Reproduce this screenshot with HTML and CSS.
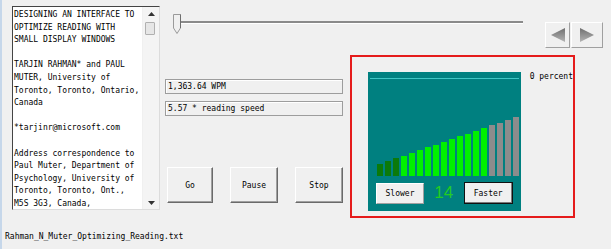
FILE: index.html
```html
<!DOCTYPE html>
<html lang="en">
<head>
  <meta charset="UTF-8">
  <title>Reading Window</title>
  <link rel="stylesheet" href="styles.css">
</head>
<body>
  <div class="window">
    <div class="main">

      <!-- document text -->
      <div class="doc">
        <div class="doc-text">DESIGNING AN INTERFACE TO
OPTIMIZE READING WITH
SMALL DISPLAY WINDOWS

TARJIN RAHMAN* and PAUL
MUTER, University of
Toronto, Toronto, Ontario,
Canada

*tarjinr@microsoft.com

Address correspondence to
Paul Muter, Department of
Psychology, University of
Toronto, Toronto, Ont.,
M5S 3G3, Canada,</div>
        <div class="scroll">
          <div class="scroll-btn">
            <svg width="7" height="4" viewBox="0 0 7 4"><polygon points="3.5,0 7,4 0,4" fill="#333"/></svg>
          </div>
          <div class="scroll-track"><div class="scroll-thumb"></div></div>
          <div class="scroll-btn">
            <svg width="7" height="4" viewBox="0 0 7 4"><polygon points="0,0 7,0 3.5,4" fill="#333"/></svg>
          </div>
        </div>
      </div>

      <div class="side">
        <!-- slider and page arrows -->
        <div class="topbar">
          <div class="slider">
            <svg class="thumb" width="10" height="21" viewBox="0 0 10 21">
              <path d="M1.5 0.5 H8.5 V14 L5 19.5 L1.5 14 Z" fill="#f0f0f0" stroke="#9a9a9a"/>
              <path d="M8.5 0.5 V14" stroke="#6e6e6e"/>
            </svg>
            <div class="track"></div>
          </div>
          <div class="arrows">
            <div class="arrow-btn">
              <svg width="16" height="16" viewBox="0 0 16 16">
                <defs>
                  <linearGradient id="tri" x1="0" y1="0" x2="0" y2="1">
                    <stop offset="0" stop-color="#6f6f6f"/>
                    <stop offset="1" stop-color="#b4b4b4"/>
                  </linearGradient>
                </defs>
                <polygon points="1,8 15,1 15,15" fill="url(#tri)"/>
              </svg>
            </div>
            <div class="arrow-btn wide">
              <svg width="16" height="16" viewBox="0 0 16 16">
                <polygon points="1,1 15,8 1,15" fill="url(#tri)"/>
              </svg>
            </div>
          </div>
        </div>

        <div class="body-row">
          <div class="controls">
            <div class="readout">1,363.64 WPM</div>
            <div class="readout">5.57 * reading speed</div>
            <div class="buttons">
              <div class="btn go">Go</div>
              <div class="btn">Pause</div>
              <div class="btn">Stop</div>
            </div>
          </div>

          <!-- speed meter (highlighted) -->
          <div class="zone">
            <div class="meter">
              <div class="meter-line"></div>
              <div class="bars">
                <span class="bar low" style="height:12px"></span>
                <span class="bar low" style="height:15px"></span>
                <span class="bar low" style="height:18px"></span>
                <span class="bar on" style="height:20px"></span>
                <span class="bar on" style="height:23px"></span>
                <span class="bar on" style="height:26px"></span>
                <span class="bar on" style="height:29px"></span>
                <span class="bar on" style="height:31px"></span>
                <span class="bar on" style="height:34px"></span>
                <span class="bar on" style="height:37px"></span>
                <span class="bar on" style="height:40px"></span>
                <span class="bar on" style="height:42px"></span>
                <span class="bar on" style="height:45px"></span>
                <span class="bar on" style="height:48px"></span>
                <span class="bar off" style="height:51px"></span>
                <span class="bar off" style="height:53px"></span>
                <span class="bar off" style="height:56px"></span>
                <span class="bar off" style="height:59px"></span>
              </div>
              <div class="meter-foot">
                <div class="small-btn">Slower</div>
                <div class="level">14</div>
                <div class="small-btn focus">Faster</div>
              </div>
            </div>
            <div class="percent">0 percent</div>
          </div>
        </div>
      </div>
    </div>

    <div class="status">Rahman_N_Muter_Optimizing_Reading.txt</div>
  </div>
</body>
</html>
```

FILE: styles.css
```css
body {
  margin: 0;
  background-color: #f0f0f0;
  font-family: "DejaVu Sans Mono", "Liberation Mono", monospace;
  font-size: 8px;
  color: #000;
  overflow: hidden;
}

.window {
  width: 609px;
  height: 249px;
  border-left: 2px solid #c6d7ea;
  display: flex;
  flex-direction: column;
}

.main {
  display: flex;
  height: 226px;
}

/* document box */
.doc {
  margin: 6px 0 0 10px;
  width: 148px;
  height: 204px;
  box-sizing: border-box;
  background: white;
  border-top: 1px solid #444;
  border-left: 1px solid #444;
  border-right: 1px solid #dcdcdc;
  border-bottom: 1px solid #dcdcdc;
  display: flex;
}

.doc-text {
  flex: 1;
  overflow: hidden;
  white-space: pre;
  line-height: 12.6px;
  padding: 2px 0 0 1px;
}

.scroll {
  width: 16px;
  display: flex;
  flex-direction: column;
  background: #f4f4f4;
  border-left: 1px solid #f0f0f0;
}

.scroll-btn {
  height: 13px;
  display: flex;
  align-items: center;
  justify-content: center;
}

.scroll-track {
  flex: 1;
}

.scroll-thumb {
  margin: 2px 0 0 2px;
  width: 8px;
  height: 11px;
  background: #e6e6e6;
  border: 1px solid #b0b0b0;
  border-radius: 1px;
}

.side {
  flex: 1;
  display: flex;
  flex-direction: column;
}

/* slider row */
.topbar {
  display: flex;
  height: 55px;
  padding-left: 12px;
}

.slider {
  position: relative;
  margin-top: 14px;
  width: 351px;
  height: 21px;
}

.thumb {
  position: absolute;
  left: 0;
  top: 0;
}

.track {
  margin: 7px 0 0 8px;
  height: 2px;
  background: #8a8a8a;
  border-bottom: 1px solid #fff;
}

.arrows {
  display: flex;
  margin: 22px 0 0 22px;
  gap: 1px;
}

.arrow-btn {
  width: 25px;
  height: 26px;
  box-sizing: border-box;
  border: 1px solid;
  border-color: #fff #a0a0a0 #a0a0a0 #fff;
  display: flex;
  align-items: center;
  justify-content: center;
}

.arrow-btn.wide {
  width: 32px;
}

/* readouts and buttons */
.body-row {
  display: flex;
}

.controls {
  width: 178px;
  margin-left: 5px;
}

.readout {
  height: 15px;
  box-sizing: border-box;
  margin-top: 7px;
  padding-left: 2px;
  line-height: 13px;
  border: 1px solid #9d9d9d;
  box-shadow: inset 1px 1px 0 #fff;
}

.readout:first-child {
  margin-top: 24px;
}

.buttons {
  display: flex;
  gap: 17px;
  margin-top: 51px;
  margin-left: 2px;
}

.btn {
  width: 48px;
  height: 36px;
  box-sizing: border-box;
  border: 1px solid;
  border-color: #fff #6a6a6a #6a6a6a #fff;
  box-shadow: inset -1px -1px 0 #a0a0a0;
  display: flex;
  align-items: center;
  justify-content: center;
}

.btn.go {
  width: 46px;
}

/* meter */
.zone {
  margin-left: 7px;
  width: 225px;
  height: 163px;
  box-sizing: border-box;
  border: 2px solid #e51b1b;
  padding: 15px 0 0 16px;
  display: flex;
}

.meter {
  width: 162px;
  height: 139px;
  background: #008080;
  display: flex;
  flex-direction: column;
}

.meter-line {
  margin: 6px 2px 0;
  height: 1px;
  background: #3fc4c4;
}

.bars {
  height: 97px;
  padding-left: 9px;
  display: flex;
  align-items: flex-end;
  gap: 2px;
}

.bar {
  width: 6px;
}

.bar.low {
  background: #0b7a0b;
}

.bar.on {
  background: #00f000;
}

.bar.off {
  background: #8c8c8c;
}

.meter-foot {
  display: flex;
  align-items: center;
  justify-content: space-between;
  margin-top: 6px;
  padding: 0 8px;
}

.small-btn {
  width: 48px;
  height: 21px;
  box-sizing: border-box;
  background: #f0f0f0;
  border: 1px solid;
  border-color: #fff #a0a0a0 #a0a0a0 #fff;
  display: flex;
  align-items: center;
  justify-content: center;
}

.small-btn.focus {
  width: 49px;
  height: 22px;
  border: 1px solid #111;
  box-shadow: inset -1px -1px 0 #7a7a7a;
}

.level {
  font-family: "Liberation Sans", Arial, sans-serif;
  font-size: 17px;
  color: #22cc22;
}

.percent {
  margin-left: 9px;
  line-height: 10px;
  white-space: nowrap;
}

.status {
  padding-left: 3px;
  line-height: 24px;
}
```
